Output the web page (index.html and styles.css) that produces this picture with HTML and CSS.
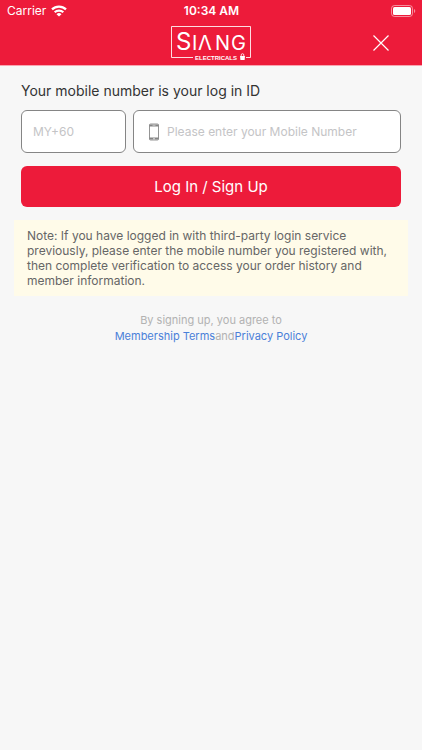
FILE: index.html
```html
<!DOCTYPE html>
<html lang="en">
<head>
<meta charset="utf-8">
<meta name="viewport" content="width=device-width, initial-scale=1">
<title>Siang Electricals - Log In</title>
<link rel="stylesheet" href="styles.css">
</head>
<body>
<header class="header">
  <div class="status">
    <div class="carrier">
      <span>Carrier</span>
      <svg width="16" height="12" viewBox="0 0 16 12" aria-hidden="true">
        <g fill="none" stroke="#fff" stroke-width="2.200">
          <path d="M1 4.400a10 10 0 0 1 14 0"/>
          <path d="M3.700 7.300a6.200 6.200 0 0 1 8.600 0"/>
        </g>
        <path d="M8 11.600 5.500 9.200a3.600 3.600 0 0 1 5 0z" fill="#fff"/>
      </svg>
    </div>
    <time class="time">10:34 AM</time>
    <svg class="battery" width="25" height="12" viewBox="0 0 25 12" aria-label="Battery full" role="img">
      <rect x=".5" y=".5" width="21" height="11" rx="3" fill="none" stroke="#fff" stroke-opacity=".5"/>
      <rect x="2" y="2" width="18" height="8" rx="1.500" fill="#fff"/>
      <path d="M23 4v4c1.700-.6 1.700-3.400 0-4z" fill="#fff" fill-opacity=".5"/>
    </svg>
  </div>
  <div class="navbar">
    <svg class="logo" width="82" height="38" viewBox="0 0 82 38" role="img" aria-label="Siang Electricals">
      <path d="M23 33.500H1.500v-31h79v31H76" fill="none" stroke="#fff" stroke-opacity=".85"/>
      <text class="logo-name" y="26"><tspan class="logo-initial" x="6">S</tspan><tspan x="22">I</tspan><tspan x="28">Λ</tspan><tspan x="45">N</tspan><tspan x="61">G</tspan></text>
      <text class="logo-sub" x="25" y="36">ELECTRICALS</text>
      <path d="M70 32h5l-.4 4h-4.200z" fill="#fff"/>
      <path d="M71.200 32v-1a1.300 1.300 0 0 1 2.600 0v1" fill="none" stroke="#fff" stroke-width=".8"/>
    </svg>
    <button class="close" type="button" aria-label="Close">
      <svg width="16" height="16" viewBox="0 0 16 16" aria-hidden="true"><path d="m.5.5 15 15m0-15-15 15" stroke="#fff" stroke-width="1.200"/></svg>
    </button>
  </div>
</header>
<main class="page">
  <form class="form">
    <label class="title" for="mobile">Your mobile number is your log in ID</label>
    <div class="fields">
      <input class="field code" type="text" placeholder="MY+60" aria-label="Country code">
      <div class="field phone">
        <svg width="10" height="18" viewBox="0 0 10 18" aria-hidden="true">
          <rect x=".5" y="1" width="9" height="16" rx="1" fill="#fff" stroke="#959595"/>
          <path d="M.5 1.500h9v2h-9zM.5 14.500h9v2h-9z" fill="#858585"/>
          <path d="M3.500 2.300h3" stroke="#ddd" stroke-width=".7"/>
          <circle cx="5" cy="15.700" r=".8" fill="#eee"/>
        </svg>
        <input id="mobile" type="tel" placeholder="Please enter your Mobile Number">
      </div>
    </div>
    <button class="submit" type="button">Log In / Sign Up</button>
  </form>
  <p class="note">Note: If you have logged in with third-party login service previously, please enter the mobile number you registered with, then complete verification to access your order history and member information.</p>
  <p class="terms">By signing up, you agree to<br><a href="#terms">Membership Terms</a>and<a href="#privacy">Privacy Policy</a></p>
</main>
</body>
</html>
```
FILE: styles.css
```css
* { box-sizing: border-box; }

body {
  margin: 0;
  background: #f7f7f7;
  color: #333;
  font-family: Inter, "Liberation Sans", sans-serif;
}

button, input { font: inherit; }

.header {
  background: #ed1b3a;
  color: #fff;
  border-bottom: 1px solid #f9a4b0;
}

.status {
  display: grid;
  grid-template-columns: 1fr auto 1fr;
  align-items: center;
  height: 21px;
  padding: 0 6px 0 7px;
  font-size: 12px;
}

.carrier {
  display: flex;
  align-items: center;
  gap: 5px;
}

.time { font-weight: 600; }

.battery { justify-self: end; }

.navbar {
  display: grid;
  grid-template-columns: 1fr auto 1fr;
  align-items: center;
  height: 44px;
  padding: 0 25px;
}

.logo {
  grid-column: 2;
  fill: #fff;
}

.logo-name { font-size: 20px; }
.logo-initial { font-size: 24px; }

.logo-sub {
  font-family: "Liberation Sans", sans-serif;
  font-size: 6px;
  font-weight: 700;
}

.close {
  display: flex;
  justify-self: end;
  padding: 8px;
  border: 0;
  background: none;
  cursor: pointer;
}

.page { padding: 15px 14px; }

.form { padding: 0 7px; }

.title {
  display: block;
  font-size: 14px;
  line-height: 20px;
}

.fields {
  display: flex;
  gap: 7px;
  margin: 9px 0 13px;
}

.field {
  height: 43px;
  border: 1px solid #858585;
  border-radius: 6px;
  background: #fff;
  font-size: 12px;
}

.code {
  width: 105px;
  padding: 0 11px;
}

.phone {
  display: flex;
  flex: 1;
  align-items: center;
  gap: 8px;
  padding: 0 15px;
}

.phone input {
  flex: 1;
  min-width: 0;
  padding: 0;
  border: 0;
  outline: 0;
  background: none;
}

input::placeholder { color: #c4c4c6; }

.submit {
  display: block;
  width: 100%;
  height: 41px;
  border: 0;
  border-radius: 6px;
  background: #ed1b3a;
  color: #fff;
  font-size: 15px;
  cursor: pointer;
}

.note {
  margin: 13px 0 16px;
  padding: 8px 13px;
  background: #fffbe9;
  color: #666;
  font-size: 12px;
  line-height: 15px;
}

.terms {
  margin: 0;
  color: #b2b2b2;
  font-size: 11px;
  line-height: 16px;
  text-align: center;
}

.terms a {
  color: #4a80d9;
  text-decoration: none;
}
```
